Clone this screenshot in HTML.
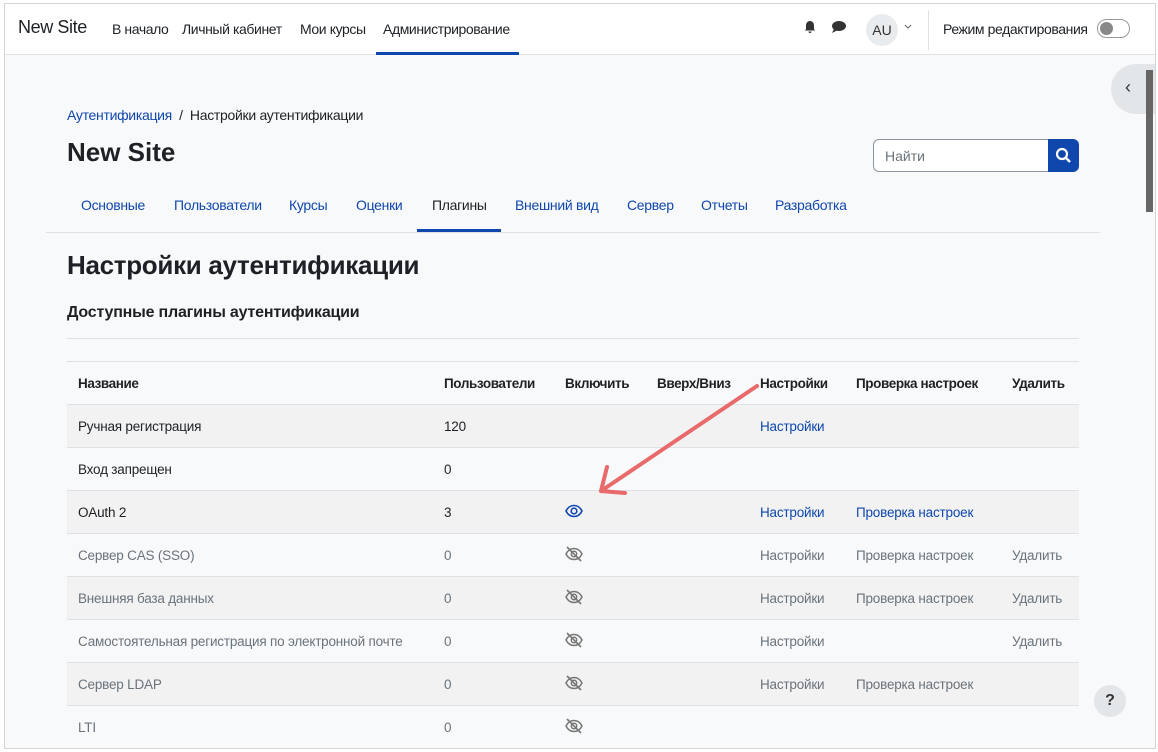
<!DOCTYPE html>
<html><head><meta charset="utf-8"><style>
*{box-sizing:border-box;margin:0;padding:0}
body{width:1158px;height:752px;overflow:hidden;background:#fff;font-family:"Liberation Sans",sans-serif;color:#1d2125;position:relative}
.frame{position:absolute;left:4px;top:3px;width:1152px;height:746px;border:1px solid #d5d5d5;background:#f8f9fa;overflow:hidden}
.nav{position:absolute;left:0;top:0;width:100%;height:51px;background:#fff;border-bottom:1px solid #dee2e6}
.nav span{position:absolute;top:17px;font-size:14px;color:#1d2125;letter-spacing:-0.4px}
a{color:#0f47ad;text-decoration:none}
.abs{position:absolute;white-space:nowrap}
table{position:absolute;left:62px;top:357px;width:1012px;border-collapse:collapse;font-size:13.5px;table-layout:fixed;letter-spacing:-0.2px}
td,th{height:43px;padding:0 11px;text-align:left;border-top:1px solid #dee2e6;white-space:nowrap;overflow:visible}
th{font-weight:bold;font-size:13.5px;letter-spacing:-0.4px}
tr.g td{background:#f2f2f2}
tr.d td{color:#6a737b}
tr.d td a{color:#6a737b}
.tabs a,.tabs span{font-size:14px;letter-spacing:-0.3px}
</style></head><body>
<div class="frame">
<div class="nav">
<span style="left:13px;top:13px;font-size:18px">New Site</span>
<span style="left:107px">В начало</span>
<span style="left:177px">Личный кабинет</span>
<span style="left:295px">Мои курсы</span>
<span style="left:378px">Администрирование</span>
<div class="abs" style="left:371px;top:48px;width:143px;height:3px;background:#0f47ad"></div>
<svg class="abs" style="left:798px;top:16px" width="14" height="14" viewBox="0 0 14 14"><path d="M7 1c-2.5 0-4 2-4 4.5V9L2 10.5h10L11 9V5.5C11 3 9.5 1 7 1zM5.5 11.5a1.5 1.5 0 003 0z" fill="#333"/></svg>
<svg class="abs" style="left:826px;top:16px" width="16" height="14" viewBox="0 0 16 14"><ellipse cx="8" cy="6" rx="7" ry="5" fill="#333"/><path d="M3 9l-2 4 5-2.5z" fill="#333"/></svg>
<div class="abs" style="left:861px;top:10px;width:32px;height:32px;border-radius:50%;background:#e9ecef;font-size:14px;text-align:center;line-height:32px;color:#333">AU</div>
<svg class="abs" style="left:899px;top:20px" width="8" height="6"><path d="M1 1l3 3 3-3" stroke="#666" fill="none"/></svg>
<div class="abs" style="left:923px;top:6px;width:1px;height:40px;background:#dee2e6"></div>
<span style="left:938px">Режим редактирования</span>
<div class="abs" style="left:1092px;top:15px;width:33px;height:19px;border:1px solid #999;border-radius:10px;background:#fff"><div style="position:absolute;left:2px;top:2px;width:13px;height:13px;border-radius:50%;background:#888"></div></div>
</div>
<div class="abs" style="left:1106px;top:60px;width:48px;height:50px;border-radius:25px 0 0 25px;background:#e3e6e8;font-size:18px;color:#333;padding:13px 0 0 14px">&#8249;</div>
<div class="abs" style="left:1141px;top:66px;width:7px;height:142px;background:#666"></div>
<div class="abs" style="left:62px;top:103px;font-size:14px;letter-spacing:-0.3px"><a>Аутентификация</a> &nbsp;/&nbsp; Настройки аутентификации</div>
<div class="abs" style="left:62px;top:133px;font-size:26px;font-weight:bold">New Site</div>
<div class="abs" style="left:868px;top:135px;width:177px;height:33px;border:1px solid #8f959e;border-radius:6px 0 0 6px;background:#fff;font-size:14px;color:#6a737b;padding:8px 0 0 11px">Найти</div>
<div class="abs" style="left:1043px;top:135px;width:31px;height:33px;background:#0f47ad;border-radius:0 6px 6px 0"><svg width="31" height="33"><circle cx="14" cy="15" r="5" stroke="#fff" stroke-width="2.2" fill="none"/><path d="M18 19l4 4" stroke="#fff" stroke-width="2.5"/></svg></div>
<div class="abs tabs" style="top:193px;left:0;width:100%">
<a class="abs" style="left:76px">Основные</a><a class="abs" style="left:169px">Пользователи</a><a class="abs" style="left:284px">Курсы</a><a class="abs" style="left:351px">Оценки</a><span class="abs" style="left:427px;color:#1d2125">Плагины</span><a class="abs" style="left:510px">Внешний вид</a><a class="abs" style="left:622px">Сервер</a><a class="abs" style="left:696px">Отчеты</a><a class="abs" style="left:770px">Разработка</a>
</div>
<div class="abs" style="left:412px;top:225px;width:84px;height:3px;background:#0f47ad"></div>
<div class="abs" style="left:41px;top:228px;width:1054px;height:1px;background:#dee2e6"></div>
<div class="abs" style="left:62px;top:246px;font-size:26px;font-weight:bold;letter-spacing:-0.3px">Настройки аутентификации</div>
<div class="abs" style="left:62px;top:300px;font-size:16px;font-weight:bold;letter-spacing:-0.2px">Доступные плагины аутентификации</div>
<div class="abs" style="left:62px;top:334px;width:1012px;height:1px;background:#dee2e6"></div>
<table>
<colgroup><col style="width:366px"><col style="width:121px"><col style="width:92px"><col style="width:103px"><col style="width:96px"><col style="width:156px"><col></colgroup>
<tr><th>Название</th><th>Пользователи</th><th>Включить</th><th>Вверх/Вниз</th><th>Настройки</th><th>Проверка настроек</th><th>Удалить</th></tr>
<tr class="g"><td>Ручная регистрация</td><td>120</td><td></td><td></td><td><a>Настройки</a></td><td></td><td></td></tr>
<tr><td>Вход запрещен</td><td>0</td><td></td><td></td><td></td><td></td><td></td></tr>
<tr class="g"><td>OAuth 2</td><td>3</td><td><svg width="18" height="14" viewBox="0 0 18 14"><path d="M1 7C3 3 6 1.5 9 1.5S15 3 17 7c-2 4-5 5.5-8 5.5S3 11 1 7z" stroke="#0f47ad" stroke-width="1.6" fill="none"/><circle cx="9" cy="7" r="2.8" stroke="#0f47ad" stroke-width="1.6" fill="none"/></svg></td><td></td><td><a>Настройки</a></td><td><a>Проверка настроек</a></td><td></td></tr>
<tr class="d"><td>Сервер CAS (SSO)</td><td>0</td><td><svg width="18" height="16" viewBox="0 0 18 16"><path d="M1 8C3 4 6 2.5 9 2.5S15 4 17 8c-2 4-5 5.5-8 5.5S3 12 1 8z" stroke="#777" stroke-width="1.5" fill="none"/><circle cx="9" cy="8" r="2.7" stroke="#777" stroke-width="1.5" fill="none"/><path d="M2 1l14 14" stroke="#777" stroke-width="1.6"/></svg></td><td></td><td><a>Настройки</a></td><td><a>Проверка настроек</a></td><td><a>Удалить</a></td></tr>
<tr class="g d"><td>Внешняя база данных</td><td>0</td><td><svg width="18" height="16" viewBox="0 0 18 16"><path d="M1 8C3 4 6 2.5 9 2.5S15 4 17 8c-2 4-5 5.5-8 5.5S3 12 1 8z" stroke="#777" stroke-width="1.5" fill="none"/><circle cx="9" cy="8" r="2.7" stroke="#777" stroke-width="1.5" fill="none"/><path d="M2 1l14 14" stroke="#777" stroke-width="1.6"/></svg></td><td></td><td><a>Настройки</a></td><td><a>Проверка настроек</a></td><td><a>Удалить</a></td></tr>
<tr class="d"><td>Самостоятельная регистрация по электронной почте</td><td>0</td><td><svg width="18" height="16" viewBox="0 0 18 16"><path d="M1 8C3 4 6 2.5 9 2.5S15 4 17 8c-2 4-5 5.5-8 5.5S3 12 1 8z" stroke="#777" stroke-width="1.5" fill="none"/><circle cx="9" cy="8" r="2.7" stroke="#777" stroke-width="1.5" fill="none"/><path d="M2 1l14 14" stroke="#777" stroke-width="1.6"/></svg></td><td></td><td><a>Настройки</a></td><td></td><td><a>Удалить</a></td></tr>
<tr class="g d"><td>Сервер LDAP</td><td>0</td><td><svg width="18" height="16" viewBox="0 0 18 16"><path d="M1 8C3 4 6 2.5 9 2.5S15 4 17 8c-2 4-5 5.5-8 5.5S3 12 1 8z" stroke="#777" stroke-width="1.5" fill="none"/><circle cx="9" cy="8" r="2.7" stroke="#777" stroke-width="1.5" fill="none"/><path d="M2 1l14 14" stroke="#777" stroke-width="1.6"/></svg></td><td></td><td><a>Настройки</a></td><td><a>Проверка настроек</a></td><td></td></tr>
<tr class="d"><td>LTI</td><td>0</td><td><svg width="18" height="16" viewBox="0 0 18 16"><path d="M1 8C3 4 6 2.5 9 2.5S15 4 17 8c-2 4-5 5.5-8 5.5S3 12 1 8z" stroke="#777" stroke-width="1.5" fill="none"/><circle cx="9" cy="8" r="2.7" stroke="#777" stroke-width="1.5" fill="none"/><path d="M2 1l14 14" stroke="#777" stroke-width="1.6"/></svg></td><td></td><td></td><td></td><td></td></tr>
</table>
<div class="abs" style="left:1089px;top:681px;width:32px;height:32px;border-radius:50%;background:#e3e6e8;text-align:center;line-height:32px;font-weight:bold;font-size:16px;color:#333">?</div>
</div>
<svg class="abs" style="left:0;top:0" width="1158" height="752"><path d="M757 386L601 491M601 491L607 467M601 491L625 493" stroke="#e86a6a" stroke-width="4" stroke-linecap="round" fill="none"/></svg>
</body></html>
